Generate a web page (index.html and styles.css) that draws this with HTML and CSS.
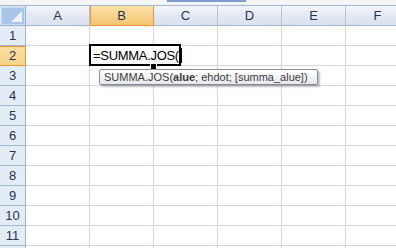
FILE: index.html
```html
<!DOCTYPE html>
<html lang="fi">
<head>
  <meta charset="UTF-8">
  <title>Taulukko</title>
  <link rel="stylesheet" href="styles.css">
</head>
<body>
  <!-- Kaavarivin alareuna -->
  <div class="formula-strip"><span class="strip-tab"></span></div>

  <div class="sheet">
    <div class="grid">
      <div class="corner"><span class="corner-tri"></span></div>
      <div class="col-head">A</div>
      <div class="col-head active">B</div>
      <div class="col-head">C</div>
      <div class="col-head">D</div>
      <div class="col-head">E</div>
      <div class="col-head">F</div>
    </div>
    <div id="rows"></div>

    <!-- Solun muokkaus ja kaavavihje -->
    <div class="editor">=SUMMA.JOS(<span class="caret"></span></div>
    <span class="fill-handle"></span>
    <div class="tooltip">SUMMA.JOS(<b>alue</b>; ehdot; [summa_alue])</div>
  </div>

  <script>
    // Rivit 1-11, ja alareunaan jäävä rivin 12 kaistale
    const rows = document.getElementById("rows");
    for (let i = 1; i <= 12; i++) {
      const row = document.createElement("div");
      row.className = "grid";
      const head = document.createElement("div");
      head.className = i === 2 ? "row-head active" : "row-head";
      head.textContent = i < 12 ? i : "";
      row.appendChild(head);
      for (let c = 0; c < 6; c++) {
        const cell = document.createElement("div");
        cell.className = "cell";
        row.appendChild(cell);
      }
      rows.appendChild(row);
    }
  </script>
</body>
</html>
```

FILE: styles.css
```css
body {
    margin: 0;
    background: #ffffff;
    font-family: 'Liberation Sans', Arial, sans-serif;
    overflow: hidden;
}

.formula-strip {
    height: 5px;
    background: #f3f5f8;
    border-bottom: 1px solid #9eb6ce;
    position: relative;
}

.strip-tab {
    position: absolute;
    left: 167px;
    top: 0;
    width: 79px;
    height: 2px;
    background: #7d9fcb;
}

.sheet {
    position: relative;
}

.grid {
    display: grid;
    grid-template-columns: 26px repeat(6, 64px);
}

.corner {
    height: 19px;
    background: #dfe8f5;
    border-right: 1px solid #9eb6ce;
    border-bottom: 1px solid #9eb6ce;
    position: relative;
}

.corner::before {
    content: "";
    position: absolute;
    left: 1px;
    top: 1px;
    right: 0;
    bottom: 0;
    background: #a9c4e9;
    border: 1px solid #c8daf2;
}

.corner-tri {
    position: absolute;
    right: 3px;
    bottom: 3px;
    width: 0;
    height: 0;
    border-left: 11px solid transparent;
    border-bottom: 11px solid #eef3fb;
    z-index: 1;
}

.col-head {
    height: 19px;
    line-height: 19px;
    text-align: center;
    font-size: 13px;
    color: #1e3658;
    background: linear-gradient(#f3f6fa, #e2e8f1 55%, #d9e2ee);
    border-right: 1px solid #b1c4dc;
    border-bottom: 1px solid #9eb6ce;
}

.col-head.active {
    background: linear-gradient(#fbe3a9, #f8d28a 55%, #f4c56e);
    border-right-color: #f29536;
    border-bottom-color: #f29536;
    box-shadow: inset 1px 0 0 #f29536;
}

.row-head {
    height: 19px;
    line-height: 20px;
    text-align: center;
    font-size: 13px;
    color: #1e3658;
    background: #e4ecf7;
    border-right: 1px solid #9eb6ce;
    border-bottom: 1px solid #9eb6ce;
}

.row-head.active {
    background: linear-gradient(#fbe0a2, #f8d28a);
    border-bottom-color: #f29536;
    border-right-color: #f29536;
    box-shadow: inset 0 1px 0 #f29536;
}

.cell {
    height: 19px;
    border-right: 1px solid #d0d7e5;
    border-bottom: 1px solid #d0d7e5;
}

.editor {
    position: absolute;
    left: 89px;
    top: 38px;
    width: 86px;
    height: 18px;
    border: 2px solid #000000;
    background: #ffffff;
    font-size: 13px;
    letter-spacing: -0.3px;
    line-height: 19px;
    padding-left: 2px;
    color: #000000;
    white-space: nowrap;
}

.caret {
    display: inline-block;
    width: 1px;
    height: 15px;
    background: #000000;
    vertical-align: -3px;
    margin-left: 2px;
}

.fill-handle {
    position: absolute;
    left: 150px;
    top: 57px;
    width: 5px;
    height: 5px;
    background: #000000;
    border: 1px solid #ffffff;
}

.tooltip {
    position: absolute;
    left: 99px;
    top: 63px;
    width: 209px;
    height: 14px;
    padding: 0 4px;
    font-size: 11px;
    line-height: 14px;
    color: #3b3b3b;
    white-space: nowrap;
    background: linear-gradient(#ffffff, #e6e8ec);
    border: 1px solid #8a8d93;
    border-radius: 2px;
    box-shadow: 2px 2px 2px rgba(0, 0, 0, 0.25);
}
```
